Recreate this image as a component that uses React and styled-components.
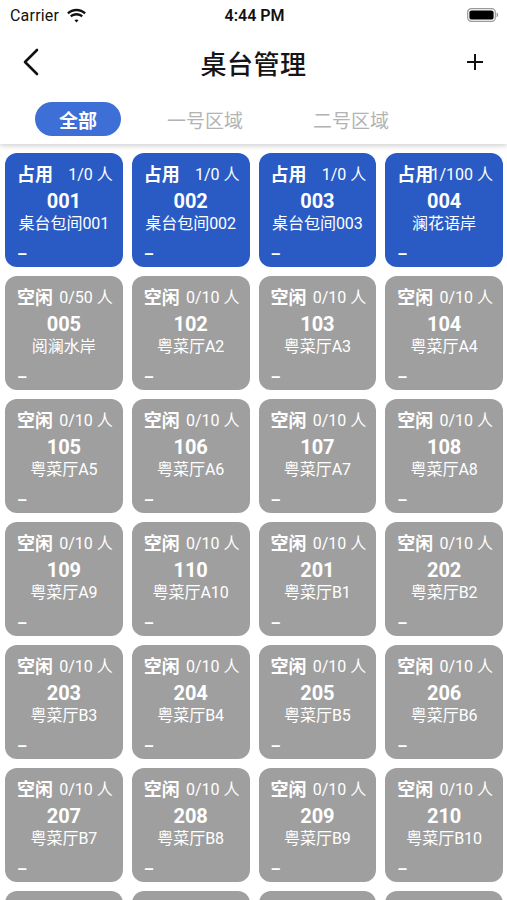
import React from 'react';
import styled, { createGlobalStyle } from 'styled-components';

const GlobalStyle = createGlobalStyle`
  html, body {
    margin: 0;
    padding: 0;
    background: #ffffff;
    overflow: hidden;
  }
  body {
    font-family: Roboto, "Noto Sans CJK SC", "Noto Sans", sans-serif;
    -webkit-font-smoothing: antialiased;
  }
`;

const Screen = styled.div`
  width: 507px;
  height: 900px;
  overflow: hidden;
  background: #ffffff;
  display: flex;
  flex-direction: column;
`;

const Header = styled.header`
  position: relative;
  z-index: 2;
  background: #ffffff;
  box-shadow: 0 2px 5px rgba(0, 0, 0, 0.18);
`;

const StatusBar = styled.div`
  height: 30px;
  display: grid;
  grid-template-columns: 1fr auto 1fr;
  align-items: center;
  padding: 0 8px 0 10px;
  font-size: 16px;
  color: #111;
`;

const Carrier = styled.div`
  display: flex;
  align-items: center;
  gap: 7px;
  letter-spacing: 0.2px;
`;

const Clock = styled.div`
  font-weight: 600;
`;

const BatteryWrap = styled.div`
  justify-self: end;
  display: flex;
  align-items: center;
`;

const NavBar = styled.div`
  height: 64px;
  display: grid;
  grid-template-columns: 60px 1fr 60px;
  align-items: center;
`;

const NavButton = styled.button`
  border: none;
  background: none;
  padding: 0;
  display: flex;
  align-items: center;
  justify-content: ${(p) => (p.$right ? 'flex-end' : 'flex-start')};
  padding-left: ${(p) => (p.$right ? '0' : '22px')};
  padding-right: ${(p) => (p.$right ? '23px' : '0')};
  color: #111;
`;

const Title = styled.h1`
  margin: 0;
  text-align: center;
  font-family: "Noto Sans CJK SC", sans-serif;
  font-size: 26px;
  font-weight: 500;
  color: #151515;
  letter-spacing: 0.5px;
`;

const Tabs = styled.div`
  display: flex;
  align-items: center;
  gap: 22px;
  padding: 8px 0 8px 35px;
`;

const Tab = styled.div`
  height: 34px;
  padding: 0 24px;
  border-radius: 17px;
  display: flex;
  align-items: center;
  font-size: 19px;
  font-family: "Noto Sans CJK SC", sans-serif;
  background: ${(p) => (p.$active ? '#3e6fd6' : 'transparent')};
  color: ${(p) => (p.$active ? '#ffffff' : '#b3b3b3')};
  font-weight: ${(p) => (p.$active ? 600 : 400)};
`;

const Grid = styled.div`
  display: grid;
  grid-template-columns: repeat(4, 1fr);
  grid-auto-rows: 114px;
  gap: 9px;
  padding: 9px 4px 0 5px;
`;

const Card = styled.div`
  border-radius: 12px;
  background: ${(p) => (p.$busy ? '#2a5bc5' : '#9f9f9f')};
  color: #ffffff;
  padding: 8px 10px 0 12px;
  display: flex;
  flex-direction: column;
  overflow: hidden;
`;

const CardTop = styled.div`
  display: flex;
  align-items: center;
  justify-content: space-between;
  height: 24px;
`;

const Status = styled.span`
  font-family: "Noto Sans CJK SC", sans-serif;
  font-size: 18px;
  font-weight: 700;
  white-space: nowrap;
  min-width: 0;
  flex-shrink: 1;
`;

const Count = styled.span`
  font-size: 16px;
  white-space: nowrap;
  flex-shrink: 0;
  font-family: Roboto, "Noto Sans CJK SC", sans-serif;
`;

const Number = styled.div`
  text-align: center;
  font-size: 20px;
  font-weight: 700;
  line-height: 24px;
  margin-top: 4px;
  margin-right: 2px;
`;

const Name = styled.div`
  text-align: center;
  font-size: 16px;
  line-height: 22px;
  margin-right: 2px;
  font-family: Roboto, "Noto Sans CJK SC", sans-serif;
`;

const Dash = styled.div`
  margin-top: 10px;
  font-size: 16px;
  font-weight: 700;
  line-height: 20px;
`;

const Wifi = () => (
  <svg width="21" height="15" viewBox="0 0 21 15">
    <path d="M10.5 3.2c3 0 5.7 1.1 7.8 3l1.6-1.7C17.4 2.2 14.1.8 10.5.8S3.6 2.2 1.1 4.5l1.6 1.7c2.1-1.9 4.8-3 7.8-3z" fill="#111" />
    <path d="M10.5 7.4c1.9 0 3.6.7 4.9 1.9l1.6-1.7c-1.7-1.6-4-2.6-6.5-2.6S5.7 6 4 7.6l1.6 1.7c1.3-1.2 3-1.9 4.9-1.9z" fill="#111" />
    <path d="M10.5 11.4c.8 0 1.5.3 2 .8l-2 2.2-2-2.2c.5-.5 1.2-.8 2-.8z" fill="#111" />
  </svg>
);

const Battery = () => (
  <svg width="32" height="14" viewBox="0 0 32 14">
    <rect x="0.7" y="0.7" width="27.6" height="12.6" rx="3.6" fill="none" stroke="#9a9a9a" strokeWidth="1.2" />
    <rect x="2.4" y="2.4" width="24.2" height="9.2" rx="2.2" fill="#000" />
    <path d="M29.6 4.6v4.8c1-.3 1.6-1.3 1.6-2.4s-.6-2.1-1.6-2.4z" fill="#9a9a9a" />
  </svg>
);

const BackIcon = () => (
  <svg width="18" height="28" viewBox="0 0 18 28">
    <path d="M15 2 3 14l12 12" fill="none" stroke="#111" strokeWidth="2.6" strokeLinecap="round" strokeLinejoin="round" />
  </svg>
);

const PlusIcon = () => (
  <svg width="18" height="18" viewBox="0 0 18 18">
    <path d="M9 1v16M1 9h16" fill="none" stroke="#111" strokeWidth="2" />
  </svg>
);

const busyTables = [
  { no: '001', name: '桌台包间001', count: '1/0 人' },
  { no: '002', name: '桌台包间002', count: '1/0 人' },
  { no: '003', name: '桌台包间003', count: '1/0 人' },
  { no: '004', name: '澜花语岸', count: '1/100 人' },
];

const freeTables = [
  { no: '005', name: '阅澜水岸', count: '0/50 人' },
  ...['102', '103', '104', '105', '106', '107', '108', '109', '110'].map((no) => ({
    no,
    name: `粤菜厅A${parseInt(no, 10) - 100}`,
    count: '0/10 人',
  })),
  ...['201', '202', '203', '204', '205', '206', '207', '208', '209', '210', '211', '212', '213', '214'].map((no) => ({
    no,
    name: `粤菜厅B${parseInt(no, 10) - 200}`,
    count: '0/10 人',
  })),
];

const tables = [
  ...busyTables.map((t) => ({ ...t, busy: true })),
  ...freeTables.map((t) => ({ ...t, busy: false })),
];

const App = () => (
  <>
    <GlobalStyle />
    <Screen>
      <Header>
        <StatusBar>
          <Carrier>
            Carrier
            <Wifi />
          </Carrier>
          <Clock>4:44 PM</Clock>
          <BatteryWrap>
            <Battery />
          </BatteryWrap>
        </StatusBar>
        <NavBar>
          <NavButton>
            <BackIcon />
          </NavButton>
          <Title>桌台管理</Title>
          <NavButton $right>
            <PlusIcon />
          </NavButton>
        </NavBar>
        <Tabs>
          <Tab $active>全部</Tab>
          <Tab>一号区域</Tab>
          <Tab>二号区域</Tab>
        </Tabs>
      </Header>

      <Grid>
        {tables.map((t) => (
          <Card key={t.no} $busy={t.busy}>
            <CardTop>
              <Status>{t.busy ? '占用' : '空闲'}</Status>
              <Count>{t.count}</Count>
            </CardTop>
            <Number>{t.no}</Number>
            <Name>{t.name}</Name>
            <Dash>–</Dash>
          </Card>
        ))}
      </Grid>
    </Screen>
  </>
);

export default App;
